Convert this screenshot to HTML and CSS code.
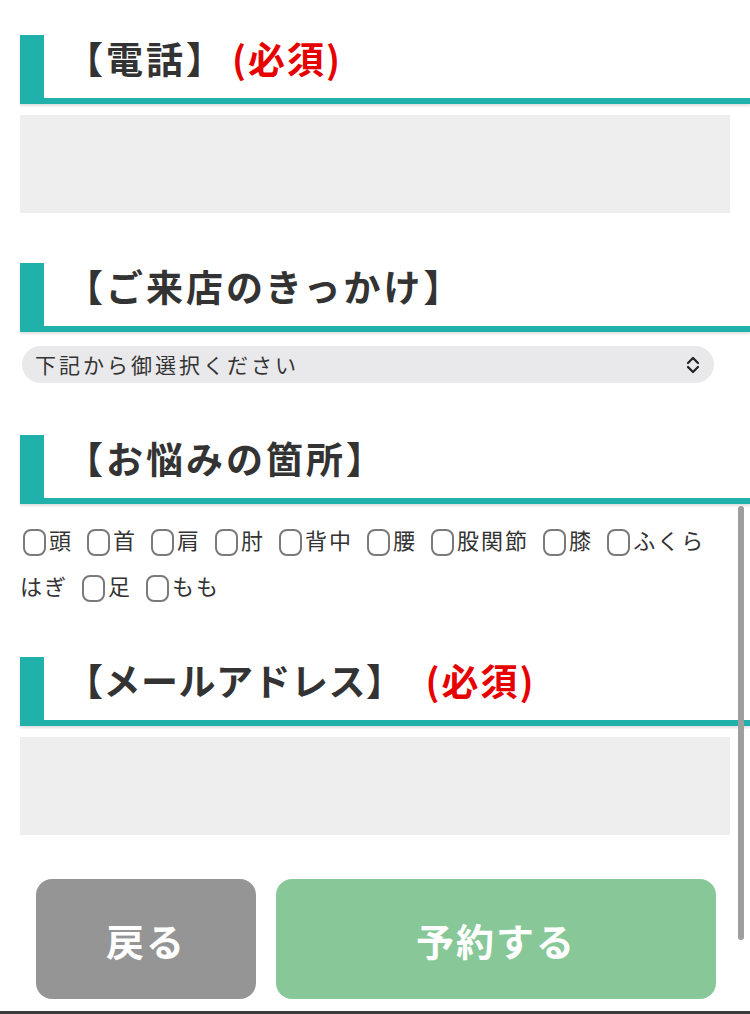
FILE: index.html
```html
<!DOCTYPE html>
<html lang="ja">
<head>
<meta charset="utf-8">
<title>予約フォーム</title>
<link rel="stylesheet" href="styles.css">
</head>
<body>
<form class="form">
  <section class="field field-tel">
    <h2 class="heading">【電話】<span class="req">(必須)</span></h2>
    <div class="text-input"></div>
  </section>

  <section class="field field-trigger">
    <h2 class="heading">【ご来店のきっかけ】</h2>
    <div class="select">
      <span class="select-label">下記から御選択ください</span>
      <svg class="chevrons" width="16" height="20" viewBox="0 0 16 20">
        <path d="M3 8 L8 3 L13 8" fill="none" stroke="#222" stroke-width="2.2" stroke-linecap="round" stroke-linejoin="round"/>
        <path d="M3 12 L8 17 L13 12" fill="none" stroke="#222" stroke-width="2.2" stroke-linecap="round" stroke-linejoin="round"/>
      </svg>
    </div>
  </section>

  <section class="field field-parts">
    <h2 class="heading">【お悩みの箇所】</h2>
    <div class="options"><span class="box"></span>頭<span class="sep"></span><span class="box"></span>首<span class="sep"></span><span class="box"></span>肩<span class="sep"></span><span class="box"></span>肘<span class="sep"></span><span class="box"></span>背中<span class="sep"></span><span class="box"></span>腰<span class="sep"></span><span class="box"></span>股関節<span class="sep"></span><span class="box"></span>膝<span class="sep"></span><span class="box"></span>ふくらはぎ<span class="sep"></span><span class="box"></span>足<span class="sep"></span><span class="box"></span>もも</div>
  </section>

  <section class="field field-mail">
    <h2 class="heading heading-tight">【メールアドレス】<span class="req req-gap">(必須)</span></h2>
    <div class="text-input"></div>
  </section>

  <div class="actions">
    <button type="button" class="btn btn-back">戻る</button>
    <button type="button" class="btn btn-submit">予約する</button>
  </div>
</form>
<div class="bottom-line"></div>
<div class="scrollbar"></div>
</body>
</html>
```

FILE: styles.css
```css
html, body {
  margin: 0;
  padding: 0;
  background: #ffffff;
}

body {
  position: relative;
  font-family: "Noto Sans CJK JP", "Noto Sans", sans-serif;
  color: #333333;
  overflow: hidden;
  height: 1014px;
}

.form {
  padding-top: 35px;
}

.field {
  margin: 0;
}

.field-tel { margin-bottom: 50px; }
.field-trigger { margin-bottom: 52px; }
.field-parts { margin-bottom: 49px; }
.field-mail { margin-bottom: 44px; }

.heading {
  margin: 0 0 11px 20px;
  padding: 0 0 17px 22px;
  border-left: 24px solid #20b2aa;
  border-bottom: 6px solid #20b2aa;
  box-shadow: 0 2px 2px rgba(0, 0, 0, 0.12);
  font-size: 37px;
  line-height: 46px;
  font-weight: 700;
  letter-spacing: 3px;
  color: #333333;
  white-space: nowrap;
}

.heading-tight {
  letter-spacing: 0.5px;
}

.req {
  color: #e60000;
  letter-spacing: 2px;
  margin-left: 6px;
}

.req-gap {
  margin-left: 22px;
}

.text-input {
  margin: 0 20px;
  height: 98px;
  background: #eeeeee;
}

.select {
  margin: 14px 36px 0 22px;
  height: 37px;
  border-radius: 19px;
  background: #e9e9ec;
  display: flex;
  align-items: center;
  justify-content: space-between;
  padding: 0 13px 0 13px;
}

.select-label {
  font-size: 21px;
  letter-spacing: 3px;
  color: #333333;
  line-height: 37px;
}

.chevrons {
  display: block;
}

.options {
  margin: 12px 30px 0 20px;
  font-size: 22px;
  line-height: 46px;
  letter-spacing: 2px;
  color: #333333;
}

.sep {
  display: inline-block;
  width: 11px;
}

.box {
  display: inline-block;
  box-sizing: border-box;
  width: 23px;
  height: 27px;
  margin: 0 3px 0 3px;
  border: 2px solid #7a7a7a;
  border-radius: 8px;
  vertical-align: -7px;
  background: #ffffff;
}

.actions {
  display: flex;
  gap: 20px;
  padding: 0 34px 0 36px;
}

.btn {
  height: 120px;
  border: none;
  border-radius: 16px;
  font-family: "Noto Sans CJK JP", "Noto Sans", sans-serif;
  font-size: 38px;
  font-weight: 700;
  letter-spacing: 2px;
  color: #ffffff;
  padding: 0;
}

.btn-back {
  width: 220px;
  background: #959595;
}

.btn-submit {
  flex: 1;
  background: #88c898;
}

.bottom-line {
  margin-top: 12px;
  height: 3px;
  background: #3c3c3c;
}

.scrollbar {
  position: absolute;
  left: 738px;
  top: 506px;
  width: 6px;
  height: 434px;
  border-radius: 3px;
  background: #9e9e9e;
}
```
